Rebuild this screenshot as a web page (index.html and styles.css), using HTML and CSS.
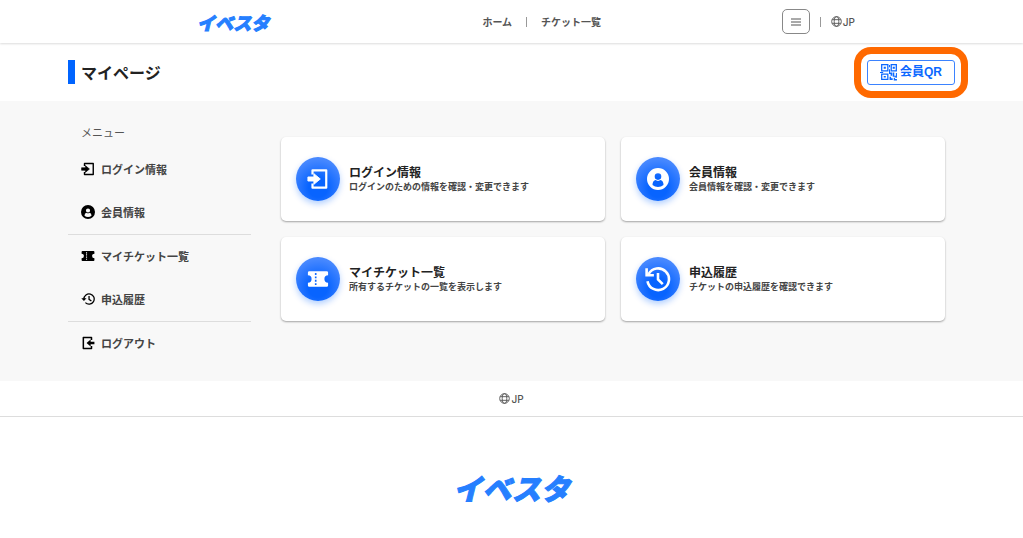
FILE: index.html
```html
<!DOCTYPE html>
<html lang="ja">
<head>
<meta charset="utf-8">
<meta name="viewport" content="width=device-width, initial-scale=1">
<title>マイページ</title>
<link rel="stylesheet" href="styles.css">
</head>
<body>
<svg class="sprite" aria-hidden="true">
  <symbol id="login" viewBox="0 0 24 24"><path d="M6 7V2.500H21V21.500H6V17" fill="none" stroke="currentColor" stroke-width="2.400" stroke-linejoin="round"/><path d="M1 9.800h6.500V6.200L14.500 12l-7 5.800v-3.600H1z" fill="currentColor" stroke="currentColor" stroke-linejoin="round"/></symbol>
  <symbol id="logout" viewBox="0 0 24 24"><path d="M18 7V2.500H4V21.500H18V17" fill="none" stroke="currentColor" stroke-width="2.600" stroke-linejoin="round"/><path d="M23 9.800h-6.500V6.200L9.500 12l7 5.800v-3.600H23z" fill="currentColor"/></symbol>
  <symbol id="member" viewBox="0 0 24 24"><path fill="currentColor" fill-rule="evenodd" d="M12 0a12 12 0 1 0 0 24a12 12 0 1 0 0-24zM12 5.800a3.600 3.600 0 1 1 0 7.200a3.600 3.600 0 1 1 0-7.200zM9 13.200q3 1.800 6 0q3 1 3 5.400q-2.500 2-6 2t-6-2q0-4.400 3-5.400z"/></symbol>
  <symbol id="ticket" viewBox="0 0 24 24"><path fill="currentColor" fill-rule="evenodd" d="M2.500 3.500h19a1.500 1.500 0 0 1 1.500 1.500V8a4 4 0 0 0 0 8v3a1.500 1.500 0 0 1-1.500 1.500H2.500a1.500 1.500 0 0 1-1.500-1.500V16a4 4 0 0 0 0-8V5a1.500 1.500 0 0 1 1.500-1.500zM8.600 5.500v2h1.800v-2zM8.600 9.200v2h1.800v-2zM8.600 12.900v2h1.800v-2zM8.600 16.600v2h1.800v-2z"/></symbol>
  <symbol id="history" viewBox="0 0 24 24"><g fill="none" stroke="currentColor" stroke-width="2.400"><path d="M3.300 7.500A10 10 0 1 1 2.300 14"/><path d="M1.500 2v6.600h6.700"/><path d="M12 6.500v6l4.400 4.200"/></g></symbol>
  <symbol id="history-small" viewBox="0 0 24 24"><g fill="none" stroke="currentColor" stroke-width="2.200"><path d="M5 12A8.800 8.800 0 1 1 7.500 18.200"/><path d="M13.800 7v5.500l4 2.800"/></g><path d="M0.500 10.500h9L5 15.500z" fill="currentColor"/></symbol>
  <symbol id="globe" viewBox="0 0 24 24"><g fill="none" stroke="currentColor" stroke-width="2"><circle cx="12" cy="12" r="10.500"/><ellipse cx="12" cy="12" rx="5" ry="10.500"/><path d="M2.500 8h19M2.500 16h19"/></g></symbol>
  <symbol id="qr" viewBox="0 0 17 17"><path fill="currentColor" fill-rule="evenodd" d="M1 1h7v7H1zM2.200 2.200v4.600h4.600V2.200zM10 1h6v7h-6zM11.200 2.200v4.600h3.600V2.200zM1 10h7v6H1zM2.200 11.200v3.600h4.600v-3.600zM3.500 3.500h2v2h-2zM12 3.500h2v2h-2zM3.500 12.200h2v1.600h-2zM8.500 2h1v2h-1zM8.500 6h1v3h2v1.500h-3zM10 10.500h1.500V12H10zM12 9h1.500v3h1.500V9.500h1V14h-1.500v-1H12zM9 13h1.500v1.500H12V16H9zM13 14h1.200v1h1.800v1.500h-3zM0 8.500h3v1H0z"/></symbol>
</svg>

<header class="site-header">
  <a class="logo" href="#">イベスタ</a>
  <nav class="main-nav" aria-label="メイン">
    <a href="#">ホーム</a>
    <span class="divider"></span>
    <a href="#">チケット一覧</a>
  </nav>
  <div class="header-tools">
    <button class="menu-button" type="button" aria-label="メニューを開く">
      <svg viewBox="0 0 10 8" aria-hidden="true"><path d="M0 1h10M0 4h10M0 7h10" stroke="currentColor" fill="none"/></svg>
    </button>
    <span class="divider"></span>
    <button class="language" type="button"><svg aria-hidden="true"><use href="#globe"/></svg>JP</button>
  </div>
</header>

<div class="title-row">
  <h1 class="page-title">マイページ</h1>
  <div class="highlight">
    <button class="qr-button" type="button"><svg aria-hidden="true"><use href="#qr"/></svg>会員QR</button>
  </div>
</div>

<div class="dashboard">
  <nav class="side-menu" aria-labelledby="menu-label">
    <p class="menu-label" id="menu-label">メニュー</p>
    <ul class="menu-group">
      <li><a href="#"><svg aria-hidden="true"><use href="#login"/></svg>ログイン情報</a></li>
      <li><a href="#"><svg aria-hidden="true"><use href="#member"/></svg>会員情報</a></li>
    </ul>
    <ul class="menu-group">
      <li><a href="#"><svg aria-hidden="true"><use href="#ticket"/></svg>マイチケット一覧</a></li>
      <li><a href="#"><svg aria-hidden="true"><use href="#history-small"/></svg>申込履歴</a></li>
    </ul>
    <ul class="menu-group">
      <li><a href="#"><svg aria-hidden="true"><use href="#logout"/></svg>ログアウト</a></li>
    </ul>
  </nav>
  <main class="cards">
    <a class="card" href="#">
      <span class="card-icon"><svg class="glyph" aria-hidden="true"><use href="#login"/></svg></span>
      <span class="card-text"><strong>ログイン情報</strong><small>ログインのための情報を確認・変更できます</small></span>
    </a>
    <a class="card" href="#">
      <span class="card-icon"><svg class="glyph" aria-hidden="true"><use href="#member"/></svg></span>
      <span class="card-text"><strong>会員情報</strong><small>会員情報を確認・変更できます</small></span>
    </a>
    <a class="card" href="#">
      <span class="card-icon"><svg class="glyph" aria-hidden="true"><use href="#ticket"/></svg></span>
      <span class="card-text"><strong>マイチケット一覧</strong><small>所有するチケットの一覧を表示します</small></span>
    </a>
    <a class="card" href="#">
      <span class="card-icon"><svg class="glyph glyph-large" aria-hidden="true"><use href="#history"/></svg></span>
      <span class="card-text"><strong>申込履歴</strong><small>チケットの申込履歴を確認できます</small></span>
    </a>
  </main>
</div>

<footer class="site-footer">
  <div class="footer-language">
    <button class="language" type="button"><svg aria-hidden="true"><use href="#globe"/></svg>JP</button>
  </div>
  <a class="logo logo-large" href="#">イベスタ</a>
</footer>
</body>
</html>
```
FILE: styles.css
```css
* { box-sizing: border-box; }

body {
  margin: 0;
  background: #fff;
  color: #222;
  font-family: "Noto Sans CJK JP", sans-serif;
  font-size: 11px;
  line-height: 16px;
}

a { color: inherit; text-decoration: none; }

button {
  margin: 0;
  padding: 0;
  border: 0;
  background: none;
  color: inherit;
  font: inherit;
  cursor: pointer;
}

svg { display: block; flex: none; }

.sprite { position: absolute; width: 0; height: 0; }

.site-header {
  display: grid;
  grid-template-columns: 285fr 299fr auto;
  align-items: center;
  height: 43px;
  padding: 0 168px 0 197px;
  box-shadow: 0 1px 2px rgba(0, 0, 0, 0.14);
}

.logo {
  justify-self: start;
  color: #267fff;
  font-size: 18px;
  font-style: italic;
  font-weight: 900;
  line-height: 24px;
  -webkit-text-stroke: 1px #267fff;
}

.main-nav,
.header-tools {
  display: flex;
  align-items: center;
  color: #555;
  font-size: 10px;
  font-weight: 700;
}

.main-nav { gap: 14px; }
.header-tools { gap: 10px; }

.divider { width: 1px; height: 10px; background: #999; }

.menu-button {
  display: grid;
  place-items: center;
  width: 28px;
  height: 25px;
  border: 1px solid #888;
  border-radius: 5px;
}

.menu-button svg { width: 10px; height: 8px; }

.language {
  display: flex;
  align-items: center;
  gap: 1px;
  color: #555;
  font-family: Inter, sans-serif;
  font-size: 10px;
  font-weight: 500;
}

.language svg { width: 11px; height: 11px; }

.title-row {
  display: flex;
  align-items: center;
  justify-content: space-between;
  height: 58px;
  padding: 0 68px;
}

.page-title {
  margin: 0;
  padding-left: 6px;
  border-left: 7px solid #0064ff;
  font-size: 16px;
  font-weight: 700;
  line-height: 24px;
}

.highlight { position: relative; }

.highlight::after {
  content: "";
  position: absolute;
  inset: -13px;
  border: 7px solid #ff6900;
  border-radius: 17px;
  pointer-events: none;
}

.qr-button {
  display: flex;
  align-items: center;
  justify-content: center;
  gap: 2px;
  width: 88px;
  height: 25px;
  border: 1px solid #3b83ff;
  border-radius: 3px;
  color: #0b68ff;
  font-family: "Liberation Sans", "Noto Sans CJK JP", sans-serif;
  font-size: 12px;
  font-weight: 700;
}

.qr-button svg { width: 18px; height: 18px; }

.dashboard {
  display: grid;
  grid-template-columns: 183px 1fr;
  gap: 30px;
  padding: 23px 78px 16px 68px;
  background: #f8f8f8;
}

.menu-label {
  margin: 0 0 8px;
  padding-left: 13px;
  color: #555;
}

.menu-group {
  margin: 0;
  padding: 0;
  list-style: none;
}

.menu-group + .menu-group { border-top: 1px solid #ddd; }

.menu-group a {
  display: flex;
  align-items: center;
  gap: 6px;
  height: 43px;
  padding: 0 0 2px 13px;
  color: #444;
  font-weight: 700;
}

.menu-group svg { width: 14px; height: 14px; color: #000; }

.cards {
  display: grid;
  grid-template-columns: 1fr 1fr;
  align-content: start;
  gap: 16px;
  padding-top: 13px;
}

.card {
  display: flex;
  align-items: center;
  gap: 9px;
  height: 84px;
  padding: 0 15px;
  border-radius: 5px;
  background: #fff;
  box-shadow: 0 1px 2px rgba(0, 0, 0, 0.35);
}

.card-icon {
  display: grid;
  flex: none;
  place-items: center;
  width: 44px;
  height: 44px;
  border-radius: 50%;
  background: radial-gradient(circle at 50% 70%, #0864ff 25%, #4788ff 75%);
  color: #fff;
  box-shadow: 0 3px 6px rgba(0, 100, 255, 0.3);
}

.glyph { width: 22px; height: 22px; }
.glyph-large { width: 26px; height: 26px; }

.card-text { display: grid; padding-bottom: 1px; }

.card-text strong {
  font-size: 12px;
  font-weight: 700;
  line-height: 17px;
}

.card-text small {
  color: #444;
  font-size: 9px;
  font-weight: 700;
  line-height: 14px;
}

.site-footer {
  display: grid;
  justify-items: center;
}

.footer-language {
  display: grid;
  place-items: center;
  width: 100%;
  height: 36px;
  border-bottom: 1px solid #ddd;
}

.logo-large {
  justify-self: center;
  margin: 52px 0 32px;
  font-size: 29px;
  line-height: 36px;
}
```
